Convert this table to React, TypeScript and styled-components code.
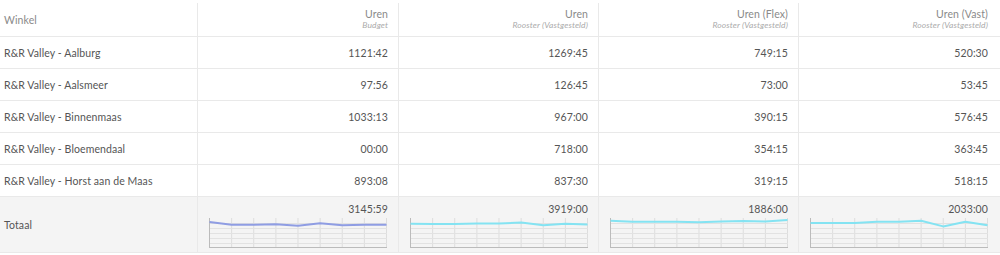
import React from "react";
import styled, { createGlobalStyle } from "styled-components";

const GlobalStyle = createGlobalStyle`
  *, *::before, *::after {
    box-sizing: border-box;
  }
  body {
    margin: 0;
    background: #ffffff;
    font-family: Lato, "Open Sans", "Liberation Sans", sans-serif;
  }
`;

const COLS = "197px 201px 200px 200px 202px";

const Table = styled.div`
  width: 1000px;
  display: flex;
  flex-direction: column;
  color: #555555;
  font-size: 10.5px;
  letter-spacing: 0.1px;
`;

const Row = styled.div<{ $height: number; $total?: boolean }>`
  display: grid;
  grid-template-columns: ${COLS};
  height: ${(p) => p.$height}px;
  border-bottom: 1px solid #e9e9e9;
  background: ${(p) => (p.$total ? "#f4f4f4" : "#ffffff")};
`;

const HeadCell = styled.div<{ $first?: boolean; $last?: boolean }>`
  margin-top: 3px;
  display: flex;
  flex-direction: column;
  justify-content: center;
  align-items: ${(p) => (p.$first ? "flex-start" : "flex-end")};
  padding: ${(p) => (p.$first ? "0 0 0 4px" : p.$last ? "0 12px 0 0" : "0 10px 0 0")};
  border-left: ${(p) => (p.$first ? "none" : "1px solid #e9e9e9")};
  color: #8a8a8a;
`;

const HeadTitle = styled.div`
  font-size: 10.5px;
  line-height: 12px;
`;

const HeadSub = styled.div`
  font-size: 8.5px;
  line-height: 11px;
  font-style: italic;
  color: #ababab;
`;

const Cell = styled.div<{ $first?: boolean; $last?: boolean }>`
  display: flex;
  align-items: center;
  justify-content: ${(p) => (p.$first ? "flex-start" : "flex-end")};
  padding: ${(p) => (p.$first ? "0 0 0 4px" : p.$last ? "0 12px 0 0" : "0 10px 0 0")};
  border-left: ${(p) => (p.$first ? "none" : "1px solid #e9e9e9")};
  white-space: nowrap;
`;

const TotalCell = styled.div<{ $last?: boolean }>`
  display: flex;
  flex-direction: column;
  align-items: flex-end;
  padding: ${(p) => (p.$last ? "6px 12px 0 11px" : "6px 10px 0 11px")};
  border-left: 1px solid #e9e9e9;
  gap: 3px;
`;

const TotalValue = styled.div`
  line-height: 12px;
`;

const ChartBox = styled.svg`
  display: block;
  align-self: stretch;
`;

interface StoreRow {
  name: string;
  values: string[];
}

const rows: StoreRow[] = [
  { name: "R&R Valley - Aalburg", values: ["1121:42", "1269:45", "749:15", "520:30"] },
  { name: "R&R Valley - Aalsmeer", values: ["97:56", "126:45", "73:00", "53:45"] },
  { name: "R&R Valley - Binnenmaas", values: ["1033:13", "967:00", "390:15", "576:45"] },
  { name: "R&R Valley - Bloemendaal", values: ["00:00", "718:00", "354:15", "363:45"] },
  { name: "R&R Valley - Horst aan de Maas", values: ["893:08", "837:30", "319:15", "518:15"] },
];

const headers = [
  { title: "Uren", sub: "Budget" },
  { title: "Uren", sub: "Rooster (Vastgesteld)" },
  { title: "Uren (Flex)", sub: "Rooster (Vastgesteld)" },
  { title: "Uren (Vast)", sub: "Rooster (Vastgesteld)" },
];

const totals = [
  { value: "3145:59", color: "#8f9de3", points: [4, 6.7, 6.7, 6.3, 7.7, 5.3, 7.3, 6.7, 6.7] },
  { value: "3919:00", color: "#84e3f2", points: [5.7, 6.1, 6.1, 5.4, 5.4, 4.6, 7.3, 5.7, 6.5] },
  { value: "1886:00", color: "#84e3f2", points: [2.7, 3.8, 3.8, 3.8, 4.2, 3.4, 3.1, 3.4, 1.9] },
  { value: "2033:00", color: "#84e3f2", points: [5, 5, 5, 3.8, 3.8, 2.7, 8.4, 3.8, 7.3] },
];

const Sparkline: React.FC<{ color: string; points: number[] }> = ({ color, points }) => {
  const w = 178;
  const h = 30;
  const step = (w - 1) / (points.length - 1);
  const hLines = [5, 10, 15, 20, 25];
  return (
    <ChartBox width={w} height={h} viewBox={`0 0 ${w} ${h}`}>
      {points.map((_, i) => (
        <line key={i} x1={0.5 + i * step} y1={0} x2={0.5 + i * step} y2={h} stroke="#dddddd" strokeWidth={1} />
      ))}
      {hLines.map((y) => (
        <line key={y} x1={0} y1={y + 0.5} x2={w} y2={y + 0.5} stroke="#e2e2e2" strokeWidth={1} />
      ))}
      <line x1={0.5} y1={0} x2={0.5} y2={h} stroke="#bbbbbb" strokeWidth={1} />
      <line x1={0} y1={h - 0.5} x2={w} y2={h - 0.5} stroke="#bbbbbb" strokeWidth={1} />
      <polyline
        fill="none"
        stroke={color}
        strokeWidth={2}
        strokeLinejoin="round"
        points={points.map((p, i) => `${0.5 + i * step},${p}`).join(" ")}
      />
    </ChartBox>
  );
};

const App: React.FC = () => {
  return (
    <>
      <GlobalStyle />
      <Table>
        <Row $height={37}>
          <HeadCell $first>
            <HeadTitle>Winkel</HeadTitle>
          </HeadCell>
          {headers.map((h, i) => (
            <HeadCell key={i} $last={i === 3}>
              <HeadTitle>{h.title}</HeadTitle>
              <HeadSub>{h.sub}</HeadSub>
            </HeadCell>
          ))}
        </Row>
        {rows.map((r) => (
          <Row key={r.name} $height={32}>
            <Cell $first>{r.name}</Cell>
            {r.values.map((v, i) => (
              <Cell key={i} $last={i === 3}>
                {v}
              </Cell>
            ))}
          </Row>
        ))}
        <Row $height={56} $total>
          <Cell $first>Totaal</Cell>
          {totals.map((t, i) => (
            <TotalCell key={i} $last={i === 3}>
              <TotalValue>{t.value}</TotalValue>
              <Sparkline color={t.color} points={t.points} />
            </TotalCell>
          ))}
        </Row>
      </Table>
    </>
  );
};

export default App;
